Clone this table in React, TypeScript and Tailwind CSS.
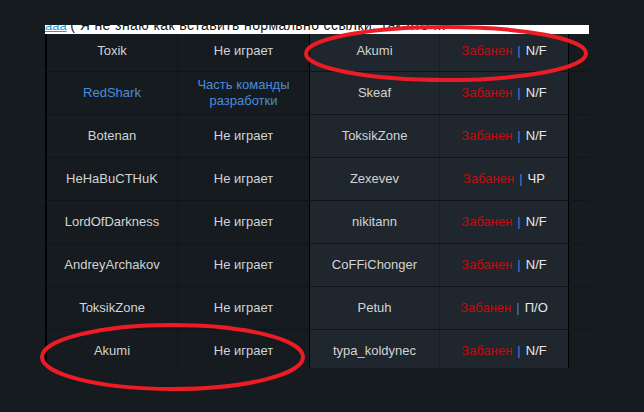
const rows = [
  { name: "Toxik", status: "Не играет", banned: "Akumi", reason: "N/F" },
  { name: "RedShark", status: "Часть команды разработки", banned: "Skeaf", reason: "N/F", staff: true },
  { name: "Botenan", status: "Не играет", banned: "ToksikZone", reason: "N/F" },
  { name: "HeHaBuCTHuK", status: "Не играет", banned: "Zexevev", reason: "ЧР" },
  { name: "LordOfDarkness", status: "Не играет", banned: "nikitann", reason: "N/F" },
  { name: "AndreyArchakov", status: "Не играет", banned: "CoFFiChonger", reason: "N/F" },
  { name: "ToksikZone", status: "Не играет", banned: "Petuh", reason: "П/О" },
  { name: "Akumi", status: "Не играет", banned: "typa_koldynec", reason: "N/F" },
];

const Row = ({ row, idx }: { row: (typeof rows)[number]; idx: number }) => {
  const first = idx === 0;
  const last = idx === rows.length - 1;
  const h = first ? "h-[37px] pb-[4px]" : last ? "h-[38px] pt-[4px]" : "h-[42px]";
  const line = last ? "" : "border-b border-[#0f1417]";
  const nameColor = row.staff ? "text-[#4a8edb]" : "text-[#d2d4d6]";
  return (
    <div className={`flex w-full ${line}`}>
      <div className="flex border-l-2 border-black bg-[#151b1f]">
        <div className={`w-[130px] flex items-center justify-center ${h} ${nameColor}`}>{row.name}</div>
        <div className={`w-[132px] flex items-center justify-center text-center leading-4 border-l border-[#10161a] ${h} ${nameColor}`}>
          {row.staff ? (
            <span>
              Часть команды
              <br />
              разработки
            </span>
          ) : (
            row.status
          )}
        </div>
      </div>
      <div className="flex border-l border-r border-black bg-[#1f262d]">
        <div className={`w-[129px] flex items-center justify-center text-[#d2d4d6] ${h}`}>{row.banned}</div>
        <div className={`w-[129px] flex items-center justify-center border-l border-[#181e23] ${h}`}>
          <span className="text-[#c80a0a]">Забанен</span>
          <span className="text-[#3d82e0] mx-[5px]">|</span>
          <span className="text-[#e6e8ea]">{row.reason}</span>
        </div>
      </div>
      <div className="w-[18px]" />
    </div>
  );
};

export default function App() {
  return (
    <div
      className="relative w-[644px] h-[412px] bg-[#161b1f] pt-[25px] pl-[45px] text-[13px]"
      style={{ fontFamily: '"Liberation Sans", Arial, sans-serif' }}
    >
      <div className="w-[544px] h-[9px] bg-white overflow-hidden">
        <div className="-mt-[6px] leading-[13px] text-[#111] whitespace-nowrap">
          <span className="text-[#1d9bd8] underline">ааа</span>{" "}
          <span className="text-[14px] tracking-[0.4px]">( Я не знаю как вставить нормально ссылки, так что ...</span>
        </div>
      </div>
      <div className="w-[544px]">
        {rows.map((row, i) => (
          <Row key={i} row={row} idx={i} />
        ))}
      </div>

      <svg className="absolute inset-0 pointer-events-none" width="644" height="412">
        <ellipse cx="446" cy="53.5" rx="140" ry="26.5" fill="none" stroke="#ed1c24" strokeWidth="4" />
        <ellipse cx="172.5" cy="357" rx="130.5" ry="32" fill="none" stroke="#ed1c24" strokeWidth="4" />
      </svg>
    </div>
  );
}
